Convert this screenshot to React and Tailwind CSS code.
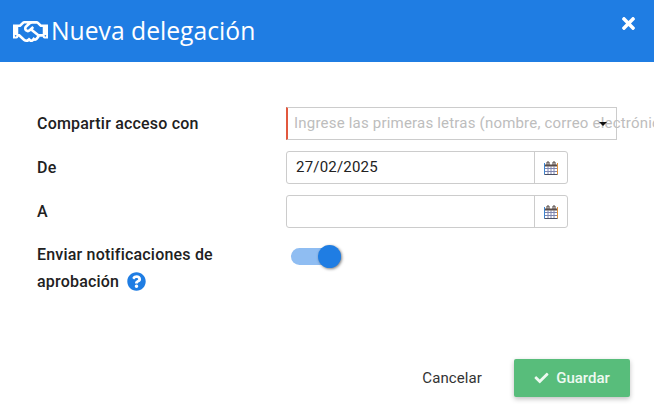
import { FaRegHandshake, FaTimes, FaCheck, FaQuestionCircle } from 'react-icons/fa'

function CalendarIcon() {
  return (
    <svg viewBox="0 0 16 16" className="h-4 w-4" aria-hidden="true">
      <rect x="1.5" y="4.5" width="13" height="10" fill="#fff" />
      <path d="M5 6.5v8M8 6.5v8M11 6.5v8M1.5 8.5h13M1.5 11.5h13" stroke="#7f86b0" strokeWidth="1" fill="none" />
      <path d="M2 4.5h12v2H2z" fill="#5a4d4a" />
      <path d="M1.5 3v11.5" stroke="#3b84d0" strokeWidth="1" />
      <path d="M14.5 3v11.5" stroke="#e0913a" strokeWidth="1" />
      <path d="M1.5 14.5h13" stroke="#4a4f63" strokeWidth="1" />
      <path d="M4 5V2h2v3M10 5V2h2v3" stroke="#4a3f3a" strokeWidth="1" fill="none" />
    </svg>
  )
}

function DateField({ value }) {
  return (
    <div className="flex h-[33px] w-[282px] rounded-[3px] border border-[#cccccc] bg-white">
      <div className="flex-1 pl-[9px] text-[15px] leading-[31px] tracking-[0.2px] text-[#222222]">{value}</div>
      <div className="flex w-[33px] items-center justify-center border-l border-[#cccccc]">
        <CalendarIcon />
      </div>
    </div>
  )
}

function Row({ label, children, className = '' }) {
  return (
    <div className={`flex ${className}`}>
      <div className="w-[249px] text-[16px] font-medium tracking-[0.2px] text-[#212121]">{label}</div>
      {children}
    </div>
  )
}

export default function App() {
  return (
    <div className="flex h-[405px] w-[654px] flex-col overflow-hidden bg-white font-['Roboto',sans-serif]">
      <header className="flex h-[62px] shrink-0 items-center justify-between bg-[#1f7de3] pr-[19px] pl-[13px] text-white">
        <div className="flex items-center gap-[3px]">
          <FaRegHandshake className="h-[35px] w-[35px]" />
          <h1 className="font-['Open_Sans',sans-serif] text-[24.7px] leading-none font-normal">Nueva delegación</h1>
        </div>
        <FaTimes className="mb-[16px] h-[19px] w-[13px]" />
      </header>

      <main className="flex flex-1 flex-col px-[37px] pt-[45px]">
        <Row label="Compartir acceso con" className="h-[33px] items-center">
          <div className="relative h-[33px] w-[331px] shrink-0 border border-l-2 border-[#cccccc] border-l-[#e2583e] bg-white">
            <div className="w-[367px] overflow-hidden pl-[6px] text-[15px] leading-[31px] tracking-[0.2px] whitespace-nowrap text-[#bdbdbd]">
              Ingrese las primeras letras (nombre, correo electrónico)
            </div>
            <span className="absolute top-[14px] right-[9px] h-0 w-0 border-x-[4px] border-t-[4px] border-x-transparent border-t-[#111111]" />
          </div>
        </Row>
        <Row label="De" className="mt-[11px] h-[33px] items-center">
          <DateField value="27/02/2025" />
        </Row>
        <Row label="A" className="mt-[11px] h-[33px] items-center">
          <DateField value="" />
        </Row>
        <Row
          className="mt-[13px]"
          label={
            <div className="leading-[27px]">
              Enviar notificaciones de
              <div className="flex items-center gap-[8px]">
                aprobación
                <FaQuestionCircle className="h-[19px] w-[19px] text-[#1f7de3]" />
              </div>
            </div>
          }
        >
          <div className="relative mt-[7px] ml-[5px] h-[17px] w-[50px] rounded-full bg-[#8fbdf2]">
            <span className="absolute top-[-3px] right-0 h-[23px] w-[23px] rounded-full bg-[#1f7de3] shadow-[1px_1px_3px_rgba(0,0,0,0.5)]" />
          </div>
        </Row>
      </main>

      <footer className="flex items-center justify-end gap-[32px] pr-[24px] pb-[8px]">
        <button className="text-[15px] tracking-[0.1px] text-[#333333]">Cancelar</button>
        <button className="flex h-[38px] w-[116px] items-center justify-center gap-[7px] rounded-[2px] bg-[#58bd7b] text-[15px] font-medium text-[#eef9f1] shadow-[0_2px_5px_rgba(0,0,0,0.25)]">
          <FaCheck className="h-[14px] w-[15px]" />
          Guardar
        </button>
      </footer>
    </div>
  )
}
